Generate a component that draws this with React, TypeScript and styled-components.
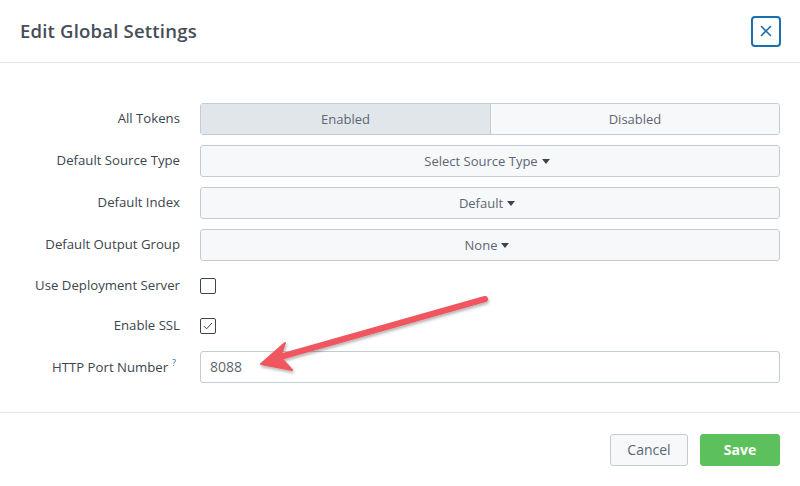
import React from "react";
import styled, { createGlobalStyle } from "styled-components";

const Global = createGlobalStyle`
  html, body { margin: 0; padding: 0; background: #fff; }
  body { font-family: "Open Sans", "Liberation Sans", Arial, sans-serif; color: #3c444d; }
  * { box-sizing: border-box; }
`;

const Modal = styled.div`
  position: relative;
  width: 800px;
  height: 486px;
  background: #fff;
  display: flex;
  flex-direction: column;
`;

const Header = styled.div`
  height: 63px;
  border-bottom: 1px solid #e1e6eb;
  display: flex;
  align-items: center;
  justify-content: space-between;
  padding: 0 19px 0 20px;
`;

const Title = styled.h1`
  margin: 0 0 2px;
  font-size: 18.5px;
  font-weight: 600;
  color: #454d56;
  letter-spacing: 0.2px;
`;

const CloseButton = styled.button`
  width: 30px;
  height: 31px;
  border: 2px solid #1a6fb0;
  border-radius: 4px;
  background: #fff;
  display: flex;
  align-items: center;
  justify-content: center;
  padding: 0;
`;

const Body = styled.div`
  padding: 40px 20px 29px 0;
  border-bottom: 1px solid #e1e6eb;
  display: flex;
  flex-direction: column;
  gap: 10px;
`;

const Row = styled.div<{ $h?: number }>`
  display: grid;
  grid-template-columns: 180px 1fr;
  column-gap: 20px;
  align-items: center;
  height: ${(p) => p.$h ?? 32}px;
`;

const Label = styled.label<{ $pad?: number }>`
  text-align: right;
  font-size: 13.2px;
  color: #3c444d;
  white-space: nowrap;
  margin-bottom: 2px;
  padding-right: ${(p) => p.$pad ?? 0}px;
`;

const Help = styled.sup`
  color: #1a6fb0;
  font-size: 9px;
  margin-left: 4px;
  vertical-align: 6px;
`;

const Segmented = styled.div`
  display: grid;
  grid-template-columns: 1fr 1fr;
  height: 32px;
  border: 1px solid #c3cbd4;
  border-radius: 3px;
  overflow: hidden;
`;

const Segment = styled.button<{ $active?: boolean }>`
  border: none;
  border-left: ${(p) => (p.$active ? "none" : "1px solid #c3cbd4")};
  background: ${(p) => (p.$active ? "#e1e6eb" : "#f7f8fa")};
  font-family: inherit;
  font-size: 13px;
  color: #5c6773;
  padding: 0 0 1px;
`;

const Select = styled.button`
  height: 32px;
  border: 1px solid #c3cbd4;
  border-radius: 3px;
  background: #f7f8fa;
  font-family: inherit;
  font-size: 13px;
  color: #5c6773;
  display: flex;
  align-items: center;
  justify-content: center;
  gap: 4px;
  padding: 0 6px 1px 0;
`;

const Caret = styled.span`
  width: 0;
  height: 0;
  border-left: 4px solid transparent;
  border-right: 4px solid transparent;
  border-top: 5px solid #3c444d;
  margin-top: 1px;
`;

const Checkbox = styled.span`
  width: 16px;
  height: 16px;
  border: 1px solid #3c444d;
  border-radius: 2px;
  display: flex;
  align-items: center;
  justify-content: center;
  background: #fff;
`;

const Input = styled.input`
  height: 32px;
  border: 1px solid #c3cbd4;
  border-radius: 3px;
  background: #fff;
  font-family: inherit;
  font-size: 14px;
  color: #5c6773;
  padding: 0 0 1px 9px;
  outline: none;
  width: 100%;
`;

const Footer = styled.div`
  display: flex;
  justify-content: flex-end;
  gap: 12px;
  padding: 21px 20px 0;
`;

const FooterButton = styled.button<{ $primary?: boolean }>`
  height: 32px;
  width: ${(p) => (p.$primary ? 80 : 78)}px;
  border-radius: 3px;
  font-family: inherit;
  font-size: 14px;
  font-weight: ${(p) => (p.$primary ? 700 : 400)};
  color: ${(p) => (p.$primary ? "#fff" : "#5c6773")};
  background: ${(p) => (p.$primary ? "#5cc05c" : "#f7f8fa")};
  border: 1px solid ${(p) => (p.$primary ? "#5cc05c" : "#c3cbd4")};
  padding: 0 0 1px;
`;

const Annotation = styled.svg`
  position: absolute;
  left: 0;
  top: 0;
  width: 800px;
  height: 486px;
  pointer-events: none;
`;

export default function App() {
  return (
    <>
      <Global />
      <Modal>
        <Header>
          <Title>Edit Global Settings</Title>
          <CloseButton aria-label="Close">
            <svg width="12" height="12" viewBox="0 0 12 12">
              <path d="M1.5 1.5 L10.5 10.5 M10.5 1.5 L1.5 10.5" stroke="#1a6fb0" strokeWidth="1.6" strokeLinecap="round" />
            </svg>
          </CloseButton>
        </Header>
        <Body>
          <Row>
            <Label>All Tokens</Label>
            <Segmented>
              <Segment $active>Enabled</Segment>
              <Segment>Disabled</Segment>
            </Segmented>
          </Row>
          <Row>
            <Label>Default Source Type</Label>
            <Select>
              Select Source Type <Caret />
            </Select>
          </Row>
          <Row>
            <Label>Default Index</Label>
            <Select>
              Default <Caret />
            </Select>
          </Row>
          <Row>
            <Label>Default Output Group</Label>
            <Select>
              None <Caret />
            </Select>
          </Row>
          <Row $h={30}>
            <Label>Use Deployment Server</Label>
            <Checkbox />
          </Row>
          <Row $h={30}>
            <Label>Enable SSL</Label>
            <Checkbox>
              <svg width="10" height="8" viewBox="0 0 10 8">
                <path d="M1 4.2 L3.6 6.8 L9 1" stroke="#3c444d" strokeWidth="1" fill="none" />
              </svg>
            </Checkbox>
          </Row>
          <Row>
            <Label $pad={4}>
              HTTP Port Number<Help>?</Help>
            </Label>
            <Input defaultValue="8088" />
          </Row>
        </Body>
        <Footer>
          <FooterButton>Cancel</FooterButton>
          <FooterButton $primary>Save</FooterButton>
        </Footer>
        <Annotation viewBox="0 0 800 486">
          <defs>
            <filter id="sh" x="-20%" y="-20%" width="140%" height="140%">
              <feDropShadow dx="1" dy="2" stdDeviation="1.5" floodColor="#000" floodOpacity="0.3" />
            </filter>
          </defs>
          <g filter="url(#sh)" fill="#f0565e" stroke="#f0565e" strokeLinecap="round" strokeLinejoin="round">
            <path d="M485 299 L280 357" strokeWidth="6" fill="none" />
            <path d="M261 364 L285 343 L280 357 L292 370 Z" strokeWidth="2" />
          </g>
        </Annotation>
      </Modal>
    </>
  );
}
